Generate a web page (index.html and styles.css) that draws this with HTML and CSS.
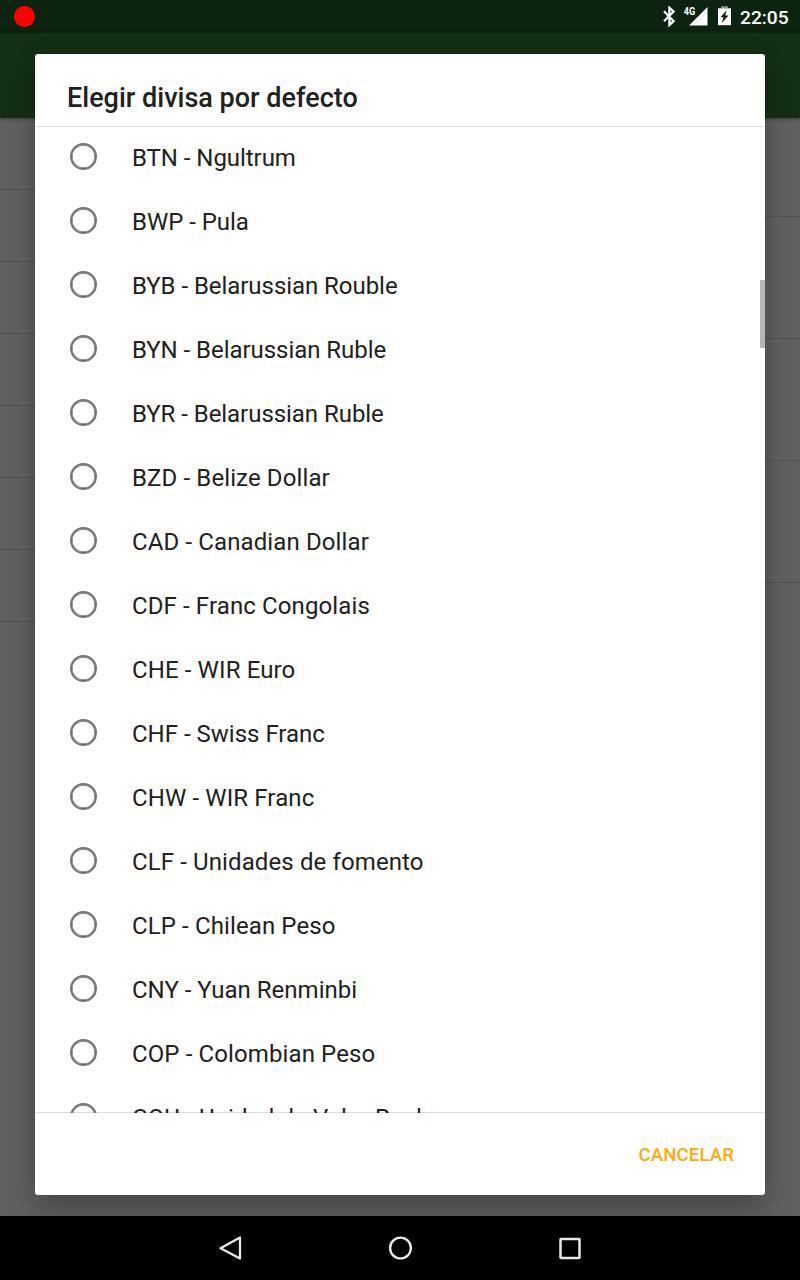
FILE: index.html
```
<!DOCTYPE html>
<html lang="es">
<head>
<meta charset="utf-8">
<title>Elegir divisa por defecto</title>
<link rel="stylesheet" href="styles.css">
</head>
<body>
<div class="screen">
  <header class="status">
    <span class="record"></span>
    <span class="spacer"></span>
    <svg class="status-icons" width="74" height="22" viewBox="0 0 74 22">
      <path d="M2 5 11.600 14.800 7.400 18.600V1.400L11.600 5.200 2 15" transform="translate(0 .3)" fill="none" stroke="#fff" stroke-width="2.200"/>
      <path d="M45.500 1v18.500H27z" fill="#fff"/>
      <text class="network" x="21.700" y="9.200" textLength="11.500" lengthAdjust="spacingAndGlyphs">4G</text>
      <path d="M59 .3h7v2h-7z" fill="#8b9b8e"/>
      <path d="M56 2.300h13V19.200H56z" fill="#fff"/>
      <path d="M64.500 4.300 58.500 11.300h3l-1.700 5.700L66.500 9.500h-3.200z" fill="#0c240f"/>
    </svg>
    <span class="clock">22:05</span>
  </header>
  <div class="appbar"></div>
  <main class="backdrop">
    <div class="column left"><i></i><i></i><i></i><i></i><i></i><i></i><i></i></div>
    <div class="column right"><i></i><i></i><i></i><i></i></div>
  </main>
  <nav class="navbar">
    <svg width="24" height="28" viewBox="0 0 24 28"><path d="M22 3.500v21L2.500 14.200z" fill="none" stroke="#e8e8e8" stroke-width="2.300" stroke-linejoin="round"/></svg>
    <svg width="24" height="28" viewBox="0 0 24 28"><circle cx="12.500" cy="14" r="10.400" fill="none" stroke="#e8e8e8" stroke-width="2.400"/></svg>
    <svg width="24" height="28" viewBox="0 0 24 28"><rect x="2.500" y="5" width="19" height="19" rx=".5" fill="none" stroke="#e8e8e8" stroke-width="2.500"/></svg>
  </nav>
  <section class="dialog" role="dialog">
    <h1 class="title">Elegir divisa por defecto</h1>
    <div class="viewport">
      <ul class="list">
        <li class="tight"><span class="radio"></span>BTN - Ngultrum</li>
        <li class="tight"><span class="radio"></span>BWP - Pula</li>
        <li class="tight"><span class="radio"></span>BYB - Belarussian Rouble</li>
        <li class="tight"><span class="radio"></span>BYN - Belarussian Ruble</li>
        <li class="tight"><span class="radio"></span>BYR - Belarussian Ruble</li>
        <li class="loose"><span class="radio"></span>BZD - Belize Dollar</li>
        <li class="loose"><span class="radio"></span>CAD - Canadian Dollar</li>
        <li class="loose"><span class="radio"></span>CDF - Franc Congolais</li>
        <li class="loose"><span class="radio"></span>CHE - WIR Euro</li>
        <li><span class="radio"></span>CHF - Swiss Franc</li>
        <li class="loose"><span class="radio"></span>CHW - WIR Franc</li>
        <li class="loose"><span class="radio"></span>CLF - Unidades de fomento</li>
        <li class="loose"><span class="radio"></span>CLP - Chilean Peso</li>
        <li><span class="radio"></span>CNY - Yuan Renminbi</li>
        <li class="loose"><span class="radio"></span>COP - Colombian Peso</li>
        <li class="loose"><span class="radio"></span>COU - Unidad de Valor Real</li>
      </ul>
      <span class="thumb"></span>
    </div>
    <footer class="actions"><button class="cancel">CANCELAR</button></footer>
  </section>
</div>
</body>
</html>
```
FILE: styles.css
```
* { box-sizing: border-box; }
body { margin: 0; font-family: Roboto, "Noto Sans", sans-serif; }
.screen {
  position: relative;
  display: flex;
  flex-direction: column;
  width: 800px;
  height: 1280px;
  overflow: hidden;
}
.status {
  display: flex;
  flex: 0 0 33px;
  align-items: flex-start;
  padding: 6px 11px 0 14px;
  background: #0c240f;
}
.record { width: 20.500px; height: 21px; border-radius: 50%; background: #f00; }
.spacer { flex: 1; }
.status-icons { display: block; margin-right: 3px; }
.network { fill: #fff; font-size: 10px; font-weight: 700; }
.clock {
  width: 50px;
  padding-left: 1px;
  font-size: 19.200px;
  font-weight: 500;
  line-height: 23px;
  white-space: nowrap;
  color: #fff;
}
.appbar {
  z-index: 1;
  flex: 0 0 85px;
  background: #133014;
  box-shadow: 0 1px 4px rgba(0, 0, 0, .4);
}
.backdrop {
  display: flex;
  flex: 1;
  justify-content: space-between;
  background: #606060;
}
.column { width: 50%; }
.column i { display: block; border-bottom: 1px solid #525252; }
.left i { height: 72px; }
.right i { height: 122px; }
.right i:first-child { height: 99px; }
.navbar {
  z-index: 3;
  display: flex;
  flex: 0 0 64px;
  align-items: center;
  justify-content: center;
  gap: 146px;
  background: #000;
}
.dialog {
  position: absolute;
  z-index: 2;
  top: 54px;
  left: 35px;
  display: flex;
  flex-direction: column;
  width: 730px;
  height: 1141px;
  border-radius: 3px;
  background: #fff;
  box-shadow: 0 24px 28px rgba(0, 0, 0, .17), 0 0 20px rgba(0, 0, 0, .14);
}
.title {
  flex: 0 0 73px;
  margin: 0;
  padding: 28px 32px 0;
  border-bottom: 1px solid #dedede;
  color: #212121;
  font-size: 27px;
  font-weight: 500;
  line-height: 32px;
}
.viewport {
  position: relative;
  flex: 1;
  margin-bottom: -1px;
  overflow: hidden;
}
.list { margin: -2px 0 0; padding: 0; list-style: none; }
.list li {
  display: flex;
  align-items: center;
  gap: 35px;
  height: 64px;
  padding: 2px 35px 0;
  color: #212121;
  font-size: 24px;
}
.list .tight { letter-spacing: -.05px; }
.list .loose { letter-spacing: .115px; }
.radio {
  width: 27px;
  height: 27px;
  margin-top: -3px;
  border: 2px solid #757575;
  border-radius: 50%;
  box-shadow: inset 0 0 0 .7px #757575;
}
.thumb {
  position: absolute;
  top: 153px;
  right: 0;
  width: 5px;
  height: 68px;
  background: #b5b6b5;
}
.actions {
  display: flex;
  flex: 0 0 83px;
  align-items: center;
  justify-content: flex-end;
  padding: 1px 31px 0 0;
  border-top: 1px solid #dedede;
}
.cancel {
  padding: 0;
  border: 0;
  background: none;
  color: #ffab0a;
  font: 500 18.670px Roboto, sans-serif;
  letter-spacing: .08px;
}
```
